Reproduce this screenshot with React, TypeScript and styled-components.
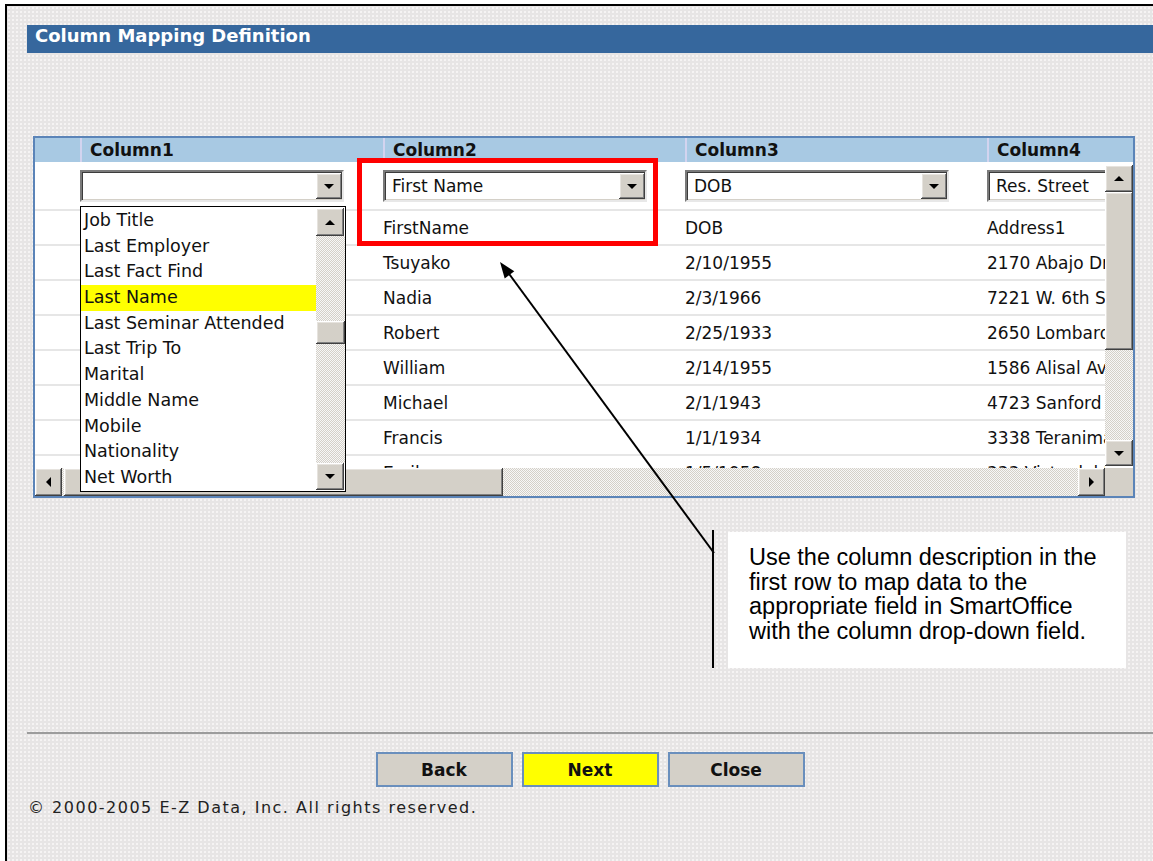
import styled, { createGlobalStyle } from "styled-components";

const GlobalStyle = createGlobalStyle`
  html, body {
    margin: 0;
    padding: 0;
    background: #fff;
  }
  body {
    font-family: "DejaVu Sans", Verdana, sans-serif;
    color: #000;
  }
`;

const columns = ["Column1", "Column2", "Column3", "Column4"];
const mapped = ["", "First Name", "DOB", "Res. Street"];

// Column1 sits under the open list, so its values stay blank here
const rows = [
  ["", "FirstName", "DOB", "Address1"],
  ["", "Tsuyako", "2/10/1955", "2170 Abajo Dr."],
  ["", "Nadia", "2/3/1966", "7221 W. 6th St."],
  ["", "Robert", "2/25/1933", "2650 Lombard St."],
  ["", "William", "2/14/1955", "1586 Alisal Ave."],
  ["", "Michael", "2/1/1943", "4723 Sanford Rd."],
  ["", "Francis", "1/1/1934", "3338 Teranimar Dr."],
  ["", "Emily", "1/5/1958", "333 Vista del Mar"],
];

const fields = [
  "Job Title",
  "Last Employer",
  "Last Fact Find",
  "Last Name",
  "Last Seminar Attended",
  "Last Trip To",
  "Marital",
  "Middle Name",
  "Mobile",
  "Nationality",
  "Net Worth",
];

const Page = styled.div`
  position: relative;
  width: 1153px;
  height: 861px;
  overflow: hidden;
  background: #fff;
`;

const Frame = styled.div`
  margin: 4px 0 0 5px;
  height: 857px;
  box-sizing: border-box;
  border-top: 2px solid #000;
  border-left: 2px solid #000;
  padding: 19px 0 0 20px;
  background-color: #e7e5e5;
  background-image: radial-gradient(circle, #f5f4f4 0.7px, transparent 1.1px);
  background-size: 4px 4px;
  display: flex;
  flex-direction: column;
`;

const TitleBar = styled.div`
  height: 28px;
  background: #36679d;
  color: #fff;
  font: bold 18px/22px "DejaVu Sans", sans-serif;
  padding-left: 8px;
`;

const GridBox = styled.div`
  margin: 83px 0 0 6px;
  width: 1102px;
  height: 362px;
  box-sizing: border-box;
  border: 2px solid #5b84b8;
  background: #fff;
  display: flex;
  flex-direction: column;
`;

const colTemplate = "45px 303px 302px 302px 303px";

const HeaderRow = styled.div`
  display: grid;
  grid-template-columns: ${colTemplate};
  height: 24px;
  flex: none;
  background: #a8c9e3;
  overflow: hidden;
`;

const HeaderCell = styled.div<{ $lead?: boolean }>`
  border-left: ${(p) => (p.$lead ? "none" : "2px solid #d3d4ef")};
  padding-left: 8px;
  font: bold 17px/24px "DejaVu Sans", sans-serif;
  color: #111;
  white-space: nowrap;
`;

const Body = styled.div`
  display: flex;
  height: 306px;
  flex: none;
`;

const Viewport = styled.div`
  width: 1070px;
  overflow: hidden;
`;

const Row = styled.div<{ $tall?: boolean }>`
  display: grid;
  grid-template-columns: ${colTemplate};
  height: ${(p) => (p.$tall ? 49 : 35)}px;
  box-sizing: border-box;
  border-bottom: 2px solid #e6e6e6;
`;

const Cell = styled.div`
  display: flex;
  align-items: center;
  font-size: 17px;
  color: #111;
  white-space: nowrap;
`;

const SelectCell = styled.div`
  padding-top: 8px;
`;

const Select = styled.div`
  width: 264px;
  height: 32px;
  box-sizing: border-box;
  border: 2px solid;
  border-color: #7a7a7a #e8e8e8 #e8e8e8 #7a7a7a;
  box-shadow: inset 1px 1px #3c3c3c, inset -1px -1px #d4d0c8;
  background: #fff;
  display: flex;
  align-items: center;
`;

const SelectText = styled.span`
  flex: 1;
  padding-left: 7px;
  font-size: 17px;
  color: #111;
  white-space: nowrap;
  overflow: hidden;
`;

const bevel = `
  background: #d4d0c8;
  box-shadow: inset -1px -1px #404040, inset 1px 1px #ffffff,
    inset -2px -2px #808080, inset 2px 2px #e6e3de;
`;

const ArrowButton = styled.div<{ $w: number; $h: number }>`
  width: ${(p) => p.$w}px;
  height: ${(p) => p.$h}px;
  flex: none;
  box-sizing: border-box;
  display: flex;
  align-items: center;
  justify-content: center;
  ${bevel}
`;

const Thumb = styled.div<{ $w?: number; $h?: number }>`
  width: ${(p) => (p.$w ? `${p.$w}px` : "auto")};
  height: ${(p) => (p.$h ? `${p.$h}px` : "auto")};
  flex: none;
  ${bevel}
`;

const Track = styled.div<{ $h?: number }>`
  flex: ${(p) => (p.$h ? "none" : "1")};
  height: ${(p) => (p.$h ? `${p.$h}px` : "auto")};
  background: repeating-conic-gradient(#d4d0c8 0 25%, #f7f7f7 0 50%) 0 0 / 2px 2px;
`;

const Triangle = styled.span<{ $dir: "up" | "down" | "left" | "right" }>`
  width: 0;
  height: 0;
  border-style: solid;
  border-color: transparent;
  ${(p) =>
    p.$dir === "down"
      ? "border-width: 5px 5px 0 5px; border-top-color: #000;"
      : p.$dir === "up"
      ? "border-width: 0 5px 5px 5px; border-bottom-color: #000;"
      : p.$dir === "left"
      ? "border-width: 5px 5px 5px 0; border-right-color: #000;"
      : "border-width: 5px 0 5px 5px; border-left-color: #000;"}
`;

const VScroll = styled.div`
  width: 28px;
  flex: none;
  padding: 3px 0 2px;
  box-sizing: border-box;
  display: flex;
  flex-direction: column;
`;

const HScroll = styled.div`
  height: 28px;
  flex: none;
  display: flex;
  background: repeating-conic-gradient(#d4d0c8 0 25%, #f7f7f7 0 50%) 0 0 / 2px 2px;
`;

const HTrack = styled.div`
  flex: 1;
  display: flex;
  padding-left: 2px;
`;

const Corner = styled.div`
  width: 28px;
  flex: none;
  background: #d4d0c8;
`;

const Divider = styled.div`
  margin-top: 234px;
  height: 0;
  border-top: 2px solid #9c9c9c;
`;

const ButtonRow = styled.div`
  margin-top: 18px;
  display: flex;
  justify-content: center;
  gap: 9px;
`;

const NavButton = styled.button<{ $primary?: boolean }>`
  width: 137px;
  height: 35px;
  box-sizing: border-box;
  border: 2px solid #6a8fbd;
  background: ${(p) => (p.$primary ? "#ffff00" : "#d4d0c8")};
  font: bold 17px "DejaVu Sans", sans-serif;
  color: #111;
  padding: 0;
  cursor: pointer;
`;

const Footer = styled.div`
  margin: 11px 0 0 1px;
  font: 16px/20px "DejaVu Sans", sans-serif;
  letter-spacing: 1.5px;
  color: #222;
`;

/* ---- floating layers: open drop-down list and the annotation ---- */

const OpenList = styled.div`
  position: absolute;
  left: 80px;
  top: 206px;
  width: 266px;
  height: 286px;
  box-sizing: border-box;
  border: 1px solid #000;
  background: #fff;
  display: flex;
`;

const ListItems = styled.div`
  width: 235px;
  padding-top: 1px;
`;

const ListItem = styled.div<{ $active?: boolean }>`
  height: 25.7px;
  line-height: 25.7px;
  padding-left: 3px;
  font-size: 17.5px;
  color: #111;
  white-space: nowrap;
  background: ${(p) => (p.$active ? "#ffff00" : "transparent")};
`;

const ListScroll = styled.div`
  width: 29px;
  display: flex;
  flex-direction: column;
  padding: 1px 0;
`;

const RedFrame = styled.div`
  position: absolute;
  left: 357px;
  top: 158px;
  width: 301px;
  height: 88px;
  box-sizing: border-box;
  border: 5px solid #ff0000;
`;

const Pointer = styled.svg`
  position: absolute;
  left: 0;
  top: 0;
  pointer-events: none;
`;

const Callout = styled.div`
  position: absolute;
  left: 728px;
  top: 532px;
  width: 398px;
  height: 136px;
  box-sizing: border-box;
  padding: 13px 0 0 21px;
  background: #fff;
  font: 23.5px/24.5px "Liberation Sans", Arial, sans-serif;
  color: #000;
  white-space: nowrap;
`;

const App = () => {
  return (
    <Page>
      <GlobalStyle />
      <Frame>
        <TitleBar>Column Mapping Definition</TitleBar>

        <GridBox>
          <HeaderRow>
            <HeaderCell $lead />
            {columns.map((c) => (
              <HeaderCell key={c}>{c}</HeaderCell>
            ))}
          </HeaderRow>

          <Body>
            <Viewport>
              <Row $tall>
                <div />
                {mapped.map((m, i) => (
                  <SelectCell key={i}>
                    <Select>
                      <SelectText>{m}</SelectText>
                      <ArrowButton $w={26} $h={26}>
                        <Triangle $dir="down" />
                      </ArrowButton>
                    </Select>
                  </SelectCell>
                ))}
              </Row>
              {rows.map((r, i) => (
                <Row key={i}>
                  <div />
                  {r.map((v, j) => (
                    <Cell key={j}>{v}</Cell>
                  ))}
                </Row>
              ))}
            </Viewport>
            <VScroll>
              <ArrowButton $w={28} $h={27}>
                <Triangle $dir="up" />
              </ArrowButton>
              <Thumb $h={158} />
              <Track />
              <ArrowButton $w={28} $h={26}>
                <Triangle $dir="down" />
              </ArrowButton>
            </VScroll>
          </Body>

          <HScroll>
            <ArrowButton $w={27} $h={28}>
              <Triangle $dir="left" />
            </ArrowButton>
            <HTrack>
              <Thumb $w={439} />
            </HTrack>
            <ArrowButton $w={27} $h={28}>
              <Triangle $dir="right" />
            </ArrowButton>
            <Corner />
          </HScroll>
        </GridBox>

        <Divider />

        <ButtonRow>
          <NavButton>Back</NavButton>
          <NavButton $primary>Next</NavButton>
          <NavButton>Close</NavButton>
        </ButtonRow>

        <Footer>© 2000-2005 E-Z Data, Inc. All rights reserved.</Footer>
      </Frame>

      <OpenList>
        <ListItems>
          {fields.map((f) => (
            <ListItem key={f} $active={f === "Last Name"}>
              {f}
            </ListItem>
          ))}
        </ListItems>
        <ListScroll>
          <ArrowButton $w={28} $h={28}>
            <Triangle $dir="up" />
          </ArrowButton>
          <Track $h={85} />
          <Thumb $h={23} />
          <Track />
          <ArrowButton $w={28} $h={27}>
            <Triangle $dir="down" />
          </ArrowButton>
        </ListScroll>
      </OpenList>

      <RedFrame />

      <Pointer width="1153" height="861" viewBox="0 0 1153 861">
        <line x1="507" y1="271" x2="714" y2="553" stroke="#000" strokeWidth="2" />
        <polygon points="500,262 514.3,271.3 504.7,278.5" fill="#000" />
        <line x1="713" y1="530" x2="713" y2="668" stroke="#000" strokeWidth="2" />
      </Pointer>

      <Callout>
        Use the column description in the
        <br />
        first row to map data to the
        <br />
        appropriate field in SmartOffice
        <br />
        with the column drop-down field.
      </Callout>
    </Page>
  );
};

export default App;
